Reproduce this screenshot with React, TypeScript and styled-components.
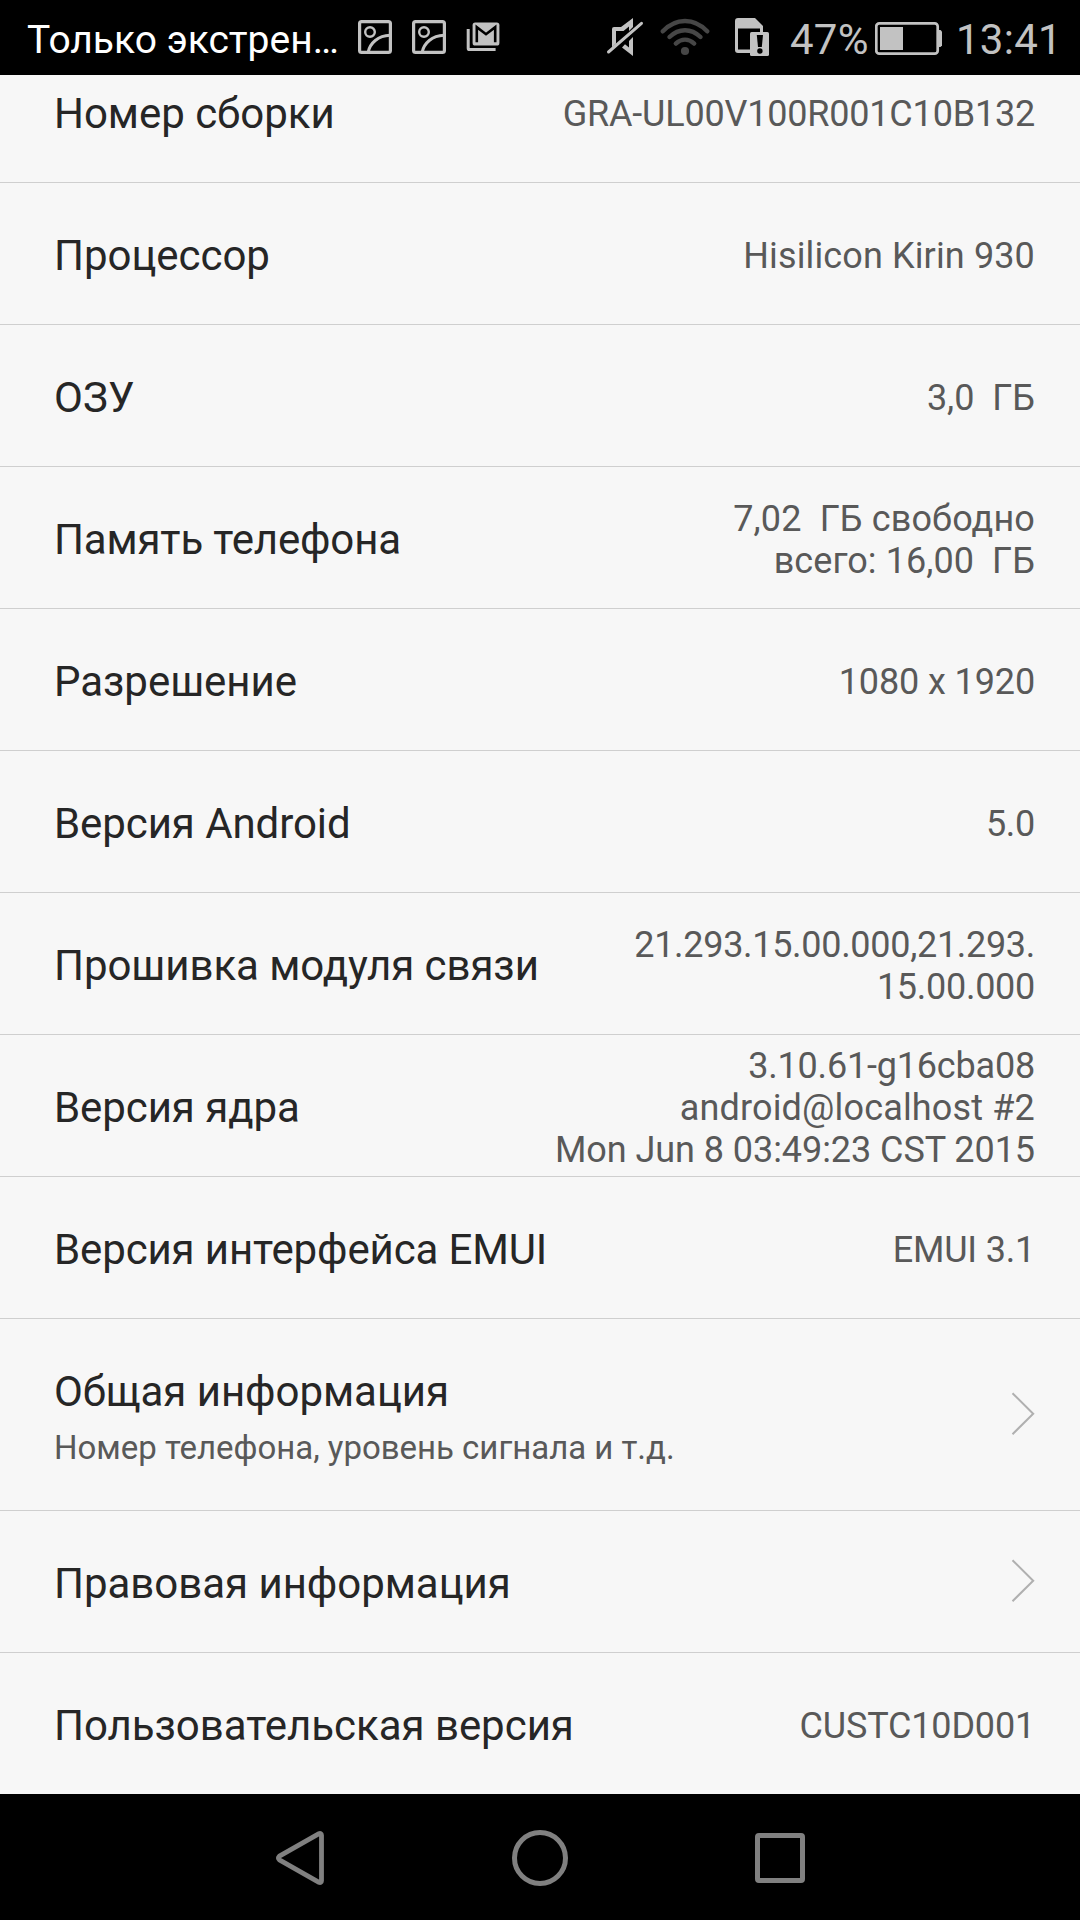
import React from "react";
import styled, { createGlobalStyle } from "styled-components";

const GlobalStyle = createGlobalStyle`
  * { box-sizing: border-box; }
  html, body { margin: 0; padding: 0; background: #000; }
  body { font-family: Roboto, "Noto Sans", sans-serif; overflow: hidden; }
  svg { display: block; flex: none; }
`;

const Screen = styled.div`
  width: 1080px;
  height: 1920px;
  display: flex;
  flex-direction: column;
  overflow: hidden;
  background: #f7f7f7;
`;

const StatusBar = styled.header`
  height: 75px;
  flex: none;
  display: flex;
  align-items: center;
  justify-content: space-between;
  padding: 0 23px 0 27px;
  background: #000;
  color: #c2c2c2;
`;

const StatusGroup = styled.div`
  display: flex;
  align-items: center;
  height: 75px;
`;

const Carrier = styled.span`
  width: 331px;
  font-size: 39px;
  line-height: 75px;
  padding-top: 5px;
  color: #fff;
  white-space: nowrap;
`;

const StatusIcon = styled.svg<{ $gap?: number }>`
  margin: 0 ${(p) => p.$gap ?? 0}px 1px 0;
`;

const StatusText = styled.span<{ $width: number }>`
  width: ${(p) => p.$width}px;
  font-size: 42px;
  line-height: 75px;
  letter-spacing: 0.25px;
  padding-top: 4px;
  white-space: nowrap;
`;

const List = styled.main`
  flex: 1;
  min-height: 0;
  display: flex;
  flex-direction: column;
  justify-content: flex-end;
  overflow: hidden;
`;

const Row = styled.section<{ $tall?: boolean }>`
  height: ${(p) => (p.$tall ? 192 : 142)}px;
  flex: none;
  display: flex;
  align-items: center;
  justify-content: space-between;
  padding: 0 45px 0 54px;
  border-bottom: 1px solid #cfcfcf;
  &:last-child {
    height: 141px;
    border-bottom: 0;
  }
`;

const Titles = styled.div<{ $tall?: boolean }>`
  display: flex;
  flex-direction: column;
  gap: 5px;
  padding-top: ${(p) => (p.$tall ? 3 : 0)}px;
`;

const Label = styled.div<{ $tracking?: number }>`
  padding-top: 4px;
  font-size: 42px;
  line-height: 50px;
  letter-spacing: ${(p) => p.$tracking ?? -0.03}px;
  color: #262626;
  white-space: nowrap;
`;

const Summary = styled.div`
  font-size: 33px;
  line-height: 44px;
  letter-spacing: -0.02px;
  padding-top: 4px;
  color: #595959;
  white-space: nowrap;
`;

const Value = styled.div`
  padding-top: 4px;
  font-size: 36px;
  line-height: 42px;
  text-align: right;
  color: #595959;
  white-space: pre;
`;

const ValueLine = styled.div<{ $tracking: number }>`
  letter-spacing: ${(p) => p.$tracking}px;
`;

const ChevronIcon = styled.svg`
  margin-bottom: 1px;
`;

const NavBar = styled.nav`
  height: 126px;
  flex: none;
  display: flex;
  align-items: center;
  justify-content: center;
  gap: 180px;
  padding-top: 2px;
  background: #000;
`;

const PictureIcon = () => (
  <StatusIcon $gap={20} width="34" height="34" viewBox="0 0 34 34" fill="none" stroke="#c2c2c2">
    <rect x="1.6" y="1.6" width="30.8" height="30.8" rx="2" strokeWidth="3.2" />
    <circle cx="12" cy="12" r="4.8" strokeWidth="2.4" />
    <path d="M10.2 32C12 23.5 20 15.5 32 15.2" strokeWidth="3" />
  </StatusIcon>
);

const MailStackIcon = () => (
  <StatusIcon width="34" height="34" viewBox="-0.6 0 34 34">
    <path d="M1.6 9V28.2Q1.6 29.6 3 29.6H29" fill="none" stroke="#c2c2c2" strokeWidth="3" />
    <rect x="6" y="2.6" width="26.8" height="23" rx="2.6" fill="#c2c2c2" />
    <path d="M10.2 22.2V7.2L19.4 14.2L28.6 7.2V22.2" fill="none" stroke="#000" strokeWidth="2.6" />
  </StatusIcon>
);

const MuteIcon = () => (
  <StatusIcon $gap={16} width="38" height="40" viewBox="606 17 38 40">
    <path
      d="M633 18V27L629 31V26.5L623.5 31H616V43.5L612 47.5V29Q612 27 614 27H621Z"
      fill="#c2c2c2"
    />
    <path d="M633 37V56L622 47.5L625 44.3L629 47.5V41Z" fill="#c2c2c2" />
    <path d="M608.5 52L641.5 23.3" stroke="#c2c2c2" strokeWidth="3" strokeLinecap="round" />
  </StatusIcon>
);

const WifiIcon = () => (
  <StatusIcon $gap={25} width="50" height="40" viewBox="660 17 50 40">
    <g fill="none" stroke="#464646" strokeWidth="4.4" strokeLinecap="round">
      <path d="M662.8 31.3Q672.5 21 685 21T707.2 31.3" />
      <path d="M669.5 37Q676.5 30.2 685 30.2T700.5 37" />
      <path d="M675.8 43.6Q680 39.6 685 39.6T694.2 43.6" />
    </g>
    <circle cx="685" cy="51" r="4.1" fill="#464646" />
  </StatusIcon>
);

const SimAlertIcon = () => (
  <StatusIcon $gap={21} width="34" height="40" viewBox="735 17 34 40">
    <path
      d="M738 18H755L763 26V32H760V28.6H738V49.5H750V53H738Q735 53 735 50V21Q735 18 738 18Z"
      fill="#c2c2c2"
    />
    <rect x="750" y="32" width="19" height="24" rx="1.6" fill="#c2c2c2" />
    <path d="M756.8 35H763L761.8 47H758Z" fill="#000" />
    <circle cx="759.9" cy="51" r="2.7" fill="#000" />
  </StatusIcon>
);

const BatteryIcon = () => (
  <StatusIcon $gap={14} width="67" height="40" viewBox="875 17 67 40">
    <rect x="876.3" y="23.3" width="61.4" height="30.4" rx="3" fill="none" stroke="#c2c2c2" strokeWidth="2.7" />
    <rect x="880" y="27" width="23" height="23" fill="#c2c2c2" />
    <path d="M937 30H940.5L942 31.5V45.5L940.5 47H937Z" fill="#c2c2c2" />
  </StatusIcon>
);

const Chevron = () => (
  <ChevronIcon width="24" height="44" viewBox="0 0 24 44" fill="none">
    <path d="M1.5 1.2L22.2 21.7L1.5 42.2" stroke="#b0b0b0" strokeWidth="2" />
  </ChevronIcon>
);

type Line = { text: string; tracking: number };
type Item = { label: string; tracking?: number; summary?: string; value?: Line[]; link?: boolean };

const items: Item[] = [
  { label: "Номер сборки", value: [{ text: "GRA-UL00V100R001C10B132", tracking: -0.2 }] },
  { label: "Процессор", value: [{ text: "Hisilicon Kirin 930", tracking: 0.13 }] },
  { label: "ОЗУ", tracking: 0.2, value: [{ text: "3,0  ГБ", tracking: 0 }] },
  {
    label: "Память телефона",
    tracking: -0.16,
    value: [
      { text: "7,02  ГБ свободно", tracking: 0.14 },
      { text: "всего: 16,00  ГБ", tracking: 0.08 },
    ],
  },
  { label: "Разрешение", value: [{ text: "1080 x 1920", tracking: -0.12 }] },
  { label: "Версия Android", tracking: -0.08, value: [{ text: "5.0", tracking: -0.3 }] },
  {
    label: "Прошивка модуля связи",
    tracking: -0.06,
    value: [
      { text: "21.293.15.00.000,21.293.", tracking: -0.3 },
      { text: "15.00.000", tracking: -0.28 },
    ],
  },
  {
    label: "Версия ядра",
    tracking: -0.08,
    value: [
      { text: "3.10.61-g16cba08", tracking: -0.19 },
      { text: "android@localhost #2", tracking: 0.16 },
      { text: "Mon Jun 8 03:49:23 CST 2015", tracking: -0.06 },
    ],
  },
  { label: "Версия интерфейса EMUI", tracking: -0.13, value: [{ text: "EMUI 3.1", tracking: -0.2 }] },
  { label: "Общая информация", summary: "Номер телефона, уровень сигнала и т.д.", link: true },
  { label: "Правовая информация", link: true },
  { label: "Пользовательская версия", value: [{ text: "CUSTC10D001", tracking: -0.18 }] },
];

export default function App() {
  return (
    <Screen>
      <GlobalStyle />
      <StatusBar>
        <StatusGroup>
          <Carrier>Только экстрен…</Carrier>
          <PictureIcon />
          <PictureIcon />
          <MailStackIcon />
        </StatusGroup>
        <StatusGroup>
          <MuteIcon />
          <WifiIcon />
          <SimAlertIcon />
          <StatusText $width={85}>47%</StatusText>
          <BatteryIcon />
          <StatusText $width={101}>13:41</StatusText>
        </StatusGroup>
      </StatusBar>
      <List>
        {items.map((item) => (
          <Row key={item.label} $tall={!!item.summary}>
            <Titles $tall={!!item.summary}>
              <Label $tracking={item.tracking}>{item.label}</Label>
              {item.summary && <Summary>{item.summary}</Summary>}
            </Titles>
            {item.value && (
              <Value>
                {item.value.map((line) => (
                  <ValueLine key={line.text} $tracking={line.tracking}>
                    {line.text}
                  </ValueLine>
                ))}
              </Value>
            )}
            {item.link && <Chevron />}
          </Row>
        ))}
      </List>
      <NavBar>
        <svg width="60" height="60" viewBox="270 1828 60 60" fill="none">
          <path d="M279.4 1856.2L318.6 1833.8Q321.5 1832.8 321.5 1835.2V1880.8Q321.5 1883.2 318.6 1882.2L279.4 1859.8Q277.6 1858 279.4 1856.2Z" stroke="#808080" strokeWidth="4.8" strokeLinejoin="round" />
        </svg>
        <svg width="60" height="60" viewBox="510 1828 60 60" fill="none">
          <circle cx="540" cy="1858" r="25.5" stroke="#808080" strokeWidth="5" />
        </svg>
        <svg width="60" height="60" viewBox="750 1828 60 60" fill="none">
          <rect x="757.5" y="1835.5" width="45" height="45" rx="1.5" stroke="#808080" strokeWidth="5" />
        </svg>
      </NavBar>
    </Screen>
  );
}
